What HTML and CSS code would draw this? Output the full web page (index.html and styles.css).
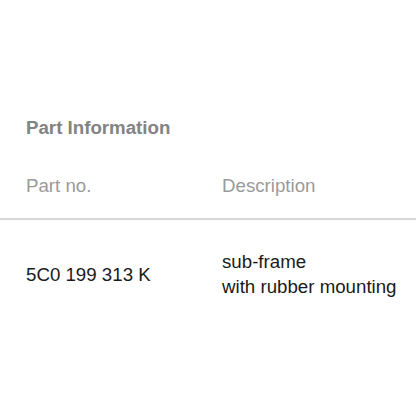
FILE: index.html
```html
<!DOCTYPE html>
<html>
<head>
<meta charset="utf-8">
<link rel="stylesheet" href="styles.css">
</head>
<body>
<section class="part-info">
  <h2 class="title">Part Information</h2>
  <div class="row head">
    <div class="cell">Part no.</div>
    <div class="cell">Description</div>
  </div>
  <div class="row data">
    <div class="cell">5C0 199 313 K</div>
    <div class="cell">sub-frame<br>with rubber mounting</div>
  </div>
</section>
</body>
</html>
```
FILE: styles.css
```css
html, body {
  margin: 0;
  padding: 0;
  background: #fff;
}
body {
  font-family: "Liberation Sans", Arial, sans-serif;
  font-size: 18.7px;
}
.part-info {
  padding-top: 117px;
}
.title {
  margin: 0 0 36px 0;
  padding-left: 26px;
  font-size: 18.7px;
  line-height: 22px;
  font-weight: bold;
  color: #838383;
}
.row {
  display: grid;
  grid-template-columns: 196px 1fr;
  padding-left: 26px;
  align-items: center;
}
.row.head {
  line-height: 22px;
  color: #9a9a9a;
  padding-bottom: 21px;
  border-bottom: 2px solid #d6d6d6;
}
.row.data {
  padding-top: 29px;
  line-height: 25px;
  color: #1a1a1a;
}
```
